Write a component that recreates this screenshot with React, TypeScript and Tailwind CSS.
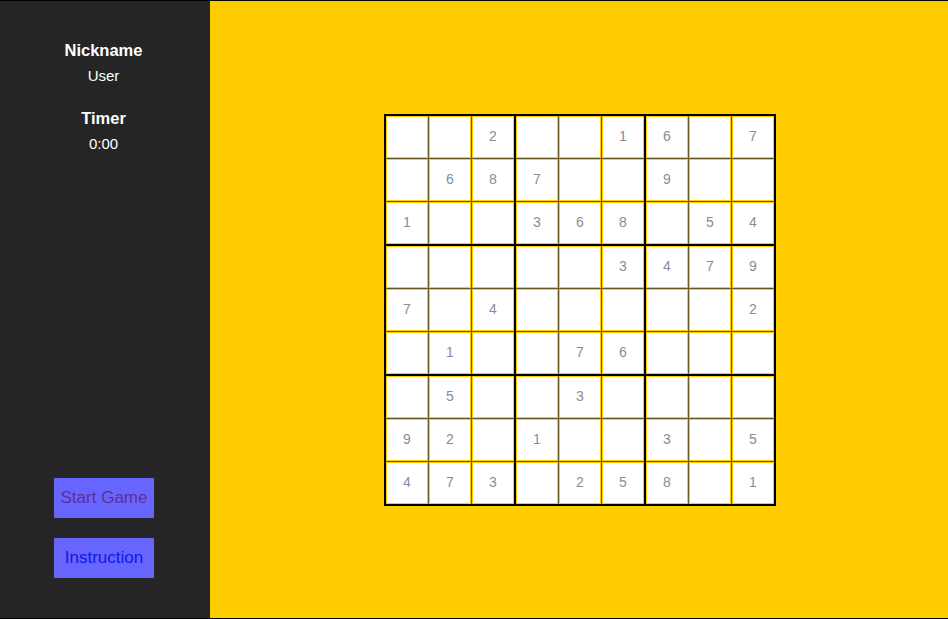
import React from "react";

const puzzle: (number | null)[][] = [
  [null, null, 2, null, null, 1, 6, null, 7],
  [null, 6, 8, 7, null, null, 9, null, null],
  [1, null, null, 3, 6, 8, null, 5, 4],
  [null, null, null, null, null, 3, 4, 7, 9],
  [7, null, 4, null, null, null, null, null, 2],
  [null, 1, null, null, 7, 6, null, null, null],
  [null, 5, null, null, 3, null, null, null, null],
  [9, 2, null, 1, null, null, 3, null, 5],
  [4, 7, 3, null, 2, 5, 8, null, 1],
];

function Box({ br, bc }: { br: number; bc: number }) {
  const cells = [];
  for (let r = 0; r < 3; r++) {
    for (let c = 0; c < 3; c++) {
      const v = puzzle[br * 3 + r][bc * 3 + c];
      cells.push(
        <div
          key={`${r}-${c}`}
          className="w-[42px] h-[42px] border border-[#ffcc00] bg-white flex items-center justify-center text-[14px] text-[#878d98]"
        >
          {v ?? ""}
        </div>
      );
    }
  }
  return <div className="grid grid-cols-3 gap-px bg-[#6b5a1f]">{cells}</div>;
}

export default function App() {
  return (
    <div
      className="flex h-[619px] w-[948px] border-y border-black"
      style={{ fontFamily: '"Liberation Sans", Arial, sans-serif' }}
    >
      {/* Sidebar */}
      <aside className="w-[210px] shrink-0 bg-[#252525] flex flex-col items-center justify-between">
        <div className="flex flex-col items-center text-white pr-[3px]">
          <div className="mt-[40px] text-[16.5px] leading-[18px] font-bold">Nickname</div>
          <div className="mt-[8px] text-[15px] leading-[18px]">User</div>
          <div className="mt-[24px] text-[16.5px] leading-[18px] font-bold">Timer</div>
          <div className="mt-[8px] text-[15px] leading-[18px]">0:00</div>
        </div>
        <div className="flex flex-col items-center gap-[20px] pb-[40px] pr-[2px]">
          <button className="w-[100px] h-[40px] bg-[#6666ff] text-[#5e2e94] text-[17px]">
            Start Game
          </button>
          <button className="w-[100px] h-[40px] bg-[#6666ff] text-[#1414e6] text-[17px]">
            Instruction
          </button>
        </div>
      </aside>

      {/* Board */}
      <main className="flex-1 bg-[#ffcc00] flex items-center justify-center pl-[2px]">
        <div className="grid grid-cols-3 gap-[2px] bg-black p-[2px]">
          {[0, 1, 2].map((br) =>
            [0, 1, 2].map((bc) => <Box key={`${br}-${bc}`} br={br} bc={bc} />)
          )}
        </div>
      </main>
    </div>
  );
}
